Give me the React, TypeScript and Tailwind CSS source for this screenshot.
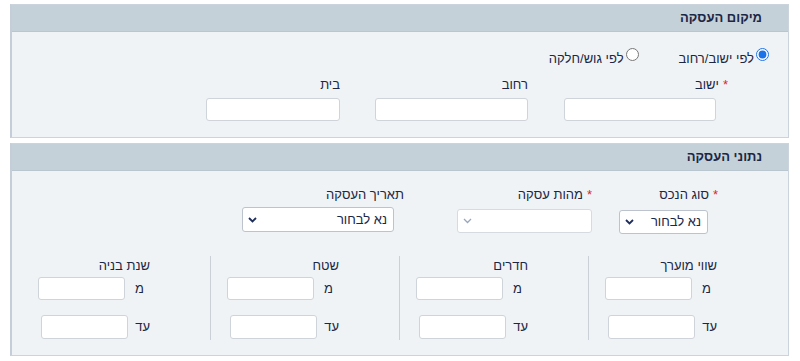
import React from 'react';

const font = { fontFamily: '"Liberation Sans", Arial, "DejaVu Sans", sans-serif' };

function Chevron({ light }: { light?: boolean }) {
  return (
    <svg width="9" height="6" viewBox="0 0 9 6" className="shrink-0">
      <path
        d="M1 1 L4.5 4.5 L8 1"
        fill="none"
        stroke={light ? '#9aa6bd' : '#1f2d5c'}
        strokeWidth={light ? 1.3 : 1.8}
      />
    </svg>
  );
}

function Req() {
  return <span className="text-[#e0242a] ml-[4px]">*</span>;
}

function TextBox({ className = '' }: { className?: string }) {
  return <div className={`h-[23px] bg-white border border-[#cfd4da] rounded-[3px] ${className}`} />;
}

function Select({ className = '', empty }: { className?: string; empty?: boolean }) {
  return (
    <div
      className={`flex items-center justify-between pr-[6px] pl-[5px] bg-white rounded-[3px] border ${
        empty ? 'border-[#d6dbe1]' : 'border-[#bcc3cc]'
      } ${className}`}
    >
      <span className="text-[13px] text-[#1c2744]">{empty ? '' : 'נא לבחור'}</span>
      <Chevron light={empty} />
    </div>
  );
}

function Panel({ title, children }: { title: string; children: React.ReactNode }) {
  return (
    <div className="ml-[10px] mr-[11px] border border-[#cbd3dc] border-l-2 border-l-[#c5cdd8]">
      <div className="h-[27px] bg-[#c4d1d9] border-b border-[#b9c6cf] flex items-center pr-[26px]">
        <span className="text-[13px] font-bold text-[#1c2744]">{title}</span>
      </div>
      <div className="bg-[#eff3f5]">{children}</div>
    </div>
  );
}

function RangeCol({ label, border }: { label: string; border?: boolean }) {
  return (
    <div className={`w-[189px] h-[84px] pt-[2px] ${border ? 'border-l border-[#c9d0d8]' : ''}`}>
      <div className="pr-[60px] h-[16px] leading-[16px] text-[13px] text-[#1c2744]">{label}</div>
      <div className="flex items-center pr-[60px] mt-[3px]">
        <span className="w-[25px] pr-[6px] text-[13px] text-[#1c2744]">מ</span>
        <TextBox className="w-[87px]" />
      </div>
      <div className="flex items-center pr-[60px] mt-[15px]">
        <span className="w-[22px] text-[13px] text-[#1c2744]">עד</span>
        <TextBox className="w-[87px] h-[24px]" />
      </div>
    </div>
  );
}

export default function App() {
  return (
    <div dir="rtl" className="w-[800px] h-[361px] bg-white pt-[4px] text-[#1c2744]" style={font}>
      <Panel title="מיקום העסקה">
        <div className="pt-[19px] pb-[16px]">
          {/* radios */}
          <div className="flex items-start pr-[19px] h-[16px]">
            <label className="flex items-start gap-[2px]">
              <input type="radio" name="by" defaultChecked className="w-[13px] h-[13px] m-0 mt-[-3px] accent-[#1a73e8]" />
              <span className="text-[13px] leading-[16px]">לפי ישוב/רחוב</span>
            </label>
            <label className="flex items-start gap-[2px] mr-[40px]">
              <input type="radio" name="by" className="w-[13px] h-[13px] m-0 mt-[-3px]" />
              <span className="text-[13px] leading-[16px]">לפי גוש/חלקה</span>
            </label>
          </div>
          {/* fields */}
          <div className="flex pr-[60px] mt-[10px]">
            <div className="w-[164px]">
              <div className="h-[16px] leading-[16px] text-[13px]">
                <Req />
                ישוב
              </div>
              <TextBox className="mt-[5px] mr-[12px] w-[152px]" />
            </div>
            <div className="w-[153px] mr-[36px]">
              <div className="h-[16px] leading-[16px] text-[13px]">רחוב</div>
              <TextBox className="mt-[5px] w-[153px]" />
            </div>
            <div className="w-[134px] mr-[35px]">
              <div className="h-[16px] leading-[16px] text-[13px]">בית</div>
              <TextBox className="mt-[5px] w-[134px]" />
            </div>
          </div>
        </div>
      </Panel>

      <div className="h-[5px]" />

      <Panel title="נתוני העסקה">
        <div className="pt-[16px] pb-[15px]">
          <div className="flex pr-[70px]">
            <div className="w-[99px]">
              <div className="h-[16px] leading-[16px] text-[13px]">
                <Req />
                סוג הנכס
              </div>
              <Select className="mt-[7px] mr-[10px] w-[89px] h-[24px]" />
            </div>
            <div className="w-[135px] mr-[27px]">
              <div className="h-[16px] leading-[16px] text-[13px]">
                <Req />
                מהות עסקה
              </div>
              <Select empty className="mt-[6px] w-[135px] h-[24px]" />
            </div>
            <div className="w-[162px] mr-[53px]">
              <div className="h-[16px] leading-[16px] text-[13px]">תאריך העסקה</div>
              <Select className="mt-[4px] mr-[10px] w-[152px] h-[25px]" />
            </div>
          </div>

          <div className="flex pr-[11px] mt-[22px]">
            <RangeCol label="שווי מוערך" border />
            <RangeCol label="חדרים" border />
            <RangeCol label="שטח" border />
            <RangeCol label="שנת בניה" />
          </div>
        </div>
      </Panel>
    </div>
  );
}
